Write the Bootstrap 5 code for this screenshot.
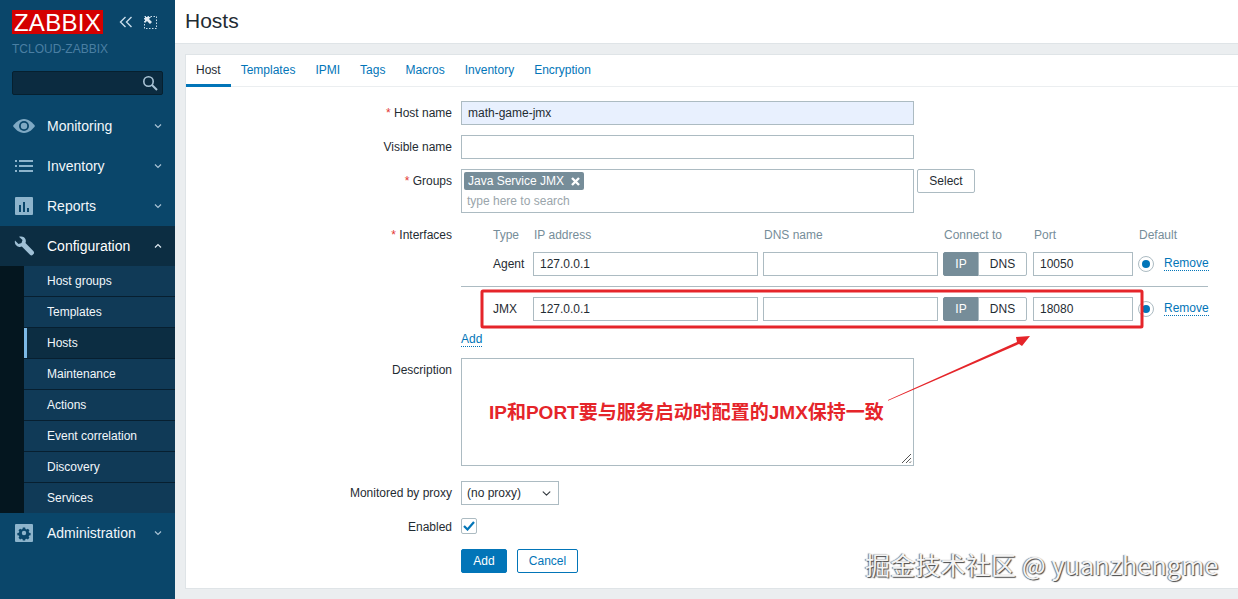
<!DOCTYPE html>
<html lang="en">
<head>
<meta charset="utf-8">
<title>Hosts</title>
<link rel="stylesheet" href="https://cdn.jsdelivr.net/npm/bootstrap@5.3.0/dist/css/bootstrap.min.css">
<style>
html,body{height:100%}
body{font:12px/14px "Liberation Sans",Arial,sans-serif;color:#1f2c33;background:#ebeef0;overflow:hidden;position:relative}
.shell{height:599px}
.side{width:175px;flex:none;background:#0a466a;color:#fff}
.side-top{height:106px;padding:10px 12px 0}
.logo-row{height:24px}
.zlogo{width:91px;height:24px;background:#d40000;color:#fff;font-size:24px;line-height:25px;text-align:center;letter-spacing:.3px}
.ctl{margin-left:16px;gap:11px}
.sname{margin-top:8px;color:#4a7fa3;font-size:12px;line-height:14px}
.sbox{margin-top:15px;width:151px;height:24px;background:#0b2b40;border:1px solid #06202f;border-radius:2px;padding:0 4px 0 0}
.mainitem{height:40px;padding:0 13px 0 13px;color:#f2f7fb;font-size:14px}
.mainitem .mico{width:22px;height:22px;flex:none;margin-right:12px}
.mainitem .chev{margin-left:auto}
.mainitem.open{background:#0c2d42;color:#fff}
.subwrap{background:#04161f;padding-left:24px}
.subitem{height:31px;padding:0 0 0 23px;color:#f2f7fb;line-height:30px;border-bottom:1px solid #071f30;background:#103a57}
.subitem:last-child{border-bottom:0;height:30px}
.subitem.cur{background:#0c2d42;box-shadow:inset 3px 0 0 #7cb9e6}
.mainzone{min-width:0}
.pagehead{height:44px;background:#fff;border-bottom:1px solid #dfe4e7;padding:0 10px}
.pagehead h1{margin:0;font-size:21px;line-height:42px;font-weight:400;color:#1f2c33}
.panel{margin:10px 0 0 10px;height:535px;background:#fff;border:1px solid #dfe4e7;border-right:0}
.tabbar{height:32px;border-bottom:1px solid #ebeef0;flex-wrap:nowrap}
.tabbar .nav-link{padding:0 10px;height:32px;line-height:30px;font-size:12px;color:#0275b8;border-bottom:3px solid transparent}
.tabbar .nav-link.active{color:#1f2c33;border-bottom-color:#0275b8}
.formbox{padding-top:14px;gap:10px}
.lbl{width:275px;flex:none;padding-right:9px;text-align:right;line-height:24px;color:#1f2c33}
.req{color:#e33734}
.fld.form-control{height:24px;border:1px solid #acbbc2;border-radius:0;padding:0 6px;font-size:12px;line-height:22px;color:#1f2c33;background:#fff;box-shadow:none}
.w-main{width:453px}
.fld.form-control.auto{background:#e8f0fe}
.multi{width:453px;height:44px;border:1px solid #acbbc2;padding:2px}
.chip{background:#768d99;color:#fff;border-radius:2px;height:18px;line-height:18px;padding:0 4px;width:120px;white-space:nowrap}
.chip svg{margin-top:5px}
.ph{color:#9aa5ab;margin:4px 0 0 3px}
.btn.bsel{height:24px;width:58px;padding:0;margin-left:3px;border:1px solid #acbbc2;border-radius:2px;color:#1f2c33;font-size:12px;background:#fff;line-height:22px}
.ifgrid{display:grid;grid-template-columns:27px 35px 225px 175px 85px 100px 21px 44px;column-gap:5px;width:747px}
.ifhead{color:#768d99;height:24px;line-height:24px}
.ifhead span{padding-left:1px}
.ifhead span:nth-child(2){padding-left:0}
.ifrow{height:24px;align-items:center}
.rowgap{margin-top:5px}
.conn.btn-group{height:24px;width:85px}
.conn .btn{padding:0;font-size:12px;height:24px;line-height:22px;border:1px solid #acbbc2;border-radius:2px;color:#1f2c33;background:#fff;width:49px;flex:none}
.conn .btn.on{background:#768d99;border-color:#768d99;color:#fff;width:36px}
.dash{color:#0275b8;text-decoration:none;border-bottom:1px dotted #0275b8;line-height:13px;display:inline-block}
.ifrow .dash{justify-self:start}
.radioz{width:16px;height:16px;border:1px solid #acbbc2;border-radius:50%;background:#fff;position:relative}
.radioz::after{content:"";position:absolute;left:3px;top:3px;width:8px;height:8px;border-radius:50%;background:#0275b8}
.divline{height:1px;background:#acbbc2;width:747px;margin:10px 0}
.addline{height:27px;padding-top:11px}
.dsc{width:453px;height:108px;border:1px solid #acbbc2;position:relative}
.grip{position:absolute;right:1px;bottom:1px}
.selrow{margin-top:5px}
.form-select.sel{width:98px;height:24px;border:1px solid #acbbc2;border-radius:0;font-size:12px;line-height:22px;padding:0 0 0 5px;color:#1f2c33;background-size:11px 9px;background-position:right 6px center;box-shadow:none}
.enrow{height:22px}
.enrow .lbl{padding-top:1px}
.ckb{width:16px;height:16px;border:1px solid #acbbc2;border-radius:2px;background:#fff}
.btnrow{margin-top:2px}
.btnset{gap:10px}
.btn.bmain{width:46px;height:24px;padding:0;background:#0275b8;border:1px solid #0275b8;color:#fff;font-size:12px;line-height:22px;border-radius:2px}
.btn.bghost{width:61px;height:24px;padding:0;background:#fff;border:1px solid #0275b8;color:#0275b8;font-size:12px;line-height:22px;border-radius:2px}
.overlay{position:absolute;left:0;top:0;pointer-events:none}
.redtext{position:absolute;left:489px;top:400px;font:700 19px/26px "Liberation Sans","Noto Sans CJK SC",sans-serif;color:#e5252a;white-space:nowrap}
.mark-wm{position:absolute;left:865px;top:548px;font:400 25px/32px "Noto Sans CJK SC",sans-serif;color:#f4f4f4;white-space:nowrap;text-shadow:1px 1px 1px #444,-1px 0 1px #777;letter-spacing:.2px}
</style>
</head>
<body>
<div class="shell d-flex">
  <aside class="side d-flex flex-column">
    <div class="side-top">
      <div class="logo-row d-flex align-items-center">
        <div class="zlogo">ZABBIX</div>
        <div class="ctl d-flex align-items-center">
          <svg width="14" height="12" viewBox="0 0 14 12" fill="none" stroke="#c9dcea" stroke-width="1.4"><path d="M6.5 1 1.5 6l5 5M12.5 1l-5 5 5 5"/></svg>
          <svg width="13" height="13" viewBox="0 0 13 13" fill="none"><rect x=".5" y=".5" width="12" height="12" stroke="#c9dcea" stroke-dasharray="1.5 1.5"/><path d="M1 1h6l-2 2 3 3-2 2-3-3-2 2z" fill="#dfeaf2"/></svg>
        </div>
      </div>
      <div class="sname">TCLOUD-ZABBIX</div>
      <div class="sbox d-flex align-items-center justify-content-end">
        <svg width="16" height="16" viewBox="0 0 16 16" fill="none" stroke="#a9c3d5" stroke-width="1.6"><circle cx="6.5" cy="6.5" r="4.7"/><path d="m10 10 5 5" stroke-width="2"/></svg>
      </div>
    </div>
    <nav class="nav flex-column flex-nowrap">
      <div class="mainitem d-flex align-items-center">
        <svg class="mico" viewBox="0 0 22 22"><path fill="#7fa9c4" d="M11 4C6 4 2 8 0 11c2 3 6 7 11 7s9-4 11-7c-2-3-6-7-11-7z"/><circle cx="11" cy="11" r="5" fill="#0a466a"/><circle cx="11" cy="11" r="3.2" fill="#7fa9c4"/></svg>
        <span>Monitoring</span>
        <svg class="chev" width="8" height="6" viewBox="0 0 8 6" fill="none" stroke="#a9c3d5" stroke-width="1.2"><path d="m1 1.5 3 3 3-3"/></svg>
      </div>
      <div class="mainitem d-flex align-items-center">
        <svg class="mico" viewBox="0 0 22 22"><path fill="#8db4cc" d="M2 5h2v2H2zM6 5h14v2H6zM2 10h2v2H2zM6 10h14v2H6zM2 15h2v2H2zM6 15h14v2H6z"/></svg>
        <span>Inventory</span>
        <svg class="chev" width="8" height="6" viewBox="0 0 8 6" fill="none" stroke="#a9c3d5" stroke-width="1.2"><path d="m1 1.5 3 3 3-3"/></svg>
      </div>
      <div class="mainitem d-flex align-items-center">
        <svg class="mico" viewBox="0 0 22 22"><rect x="2" y="2" width="18" height="18" rx="1" fill="#8db4cc"/><path fill="#0a466a" d="M6 10h2v7H6zM10 7h2v10h-2zM14 13h2v4h-2z"/></svg>
        <span>Reports</span>
        <svg class="chev" width="8" height="6" viewBox="0 0 8 6" fill="none" stroke="#a9c3d5" stroke-width="1.2"><path d="m1 1.5 3 3 3-3"/></svg>
      </div>
      <div class="mainitem open d-flex align-items-center">
        <svg class="mico" viewBox="0 0 22 22"><path fill="#9fc0d6" d="M2 5.500 5.500 9 8.500 8 9.500 5 6 1.800c3-1 6 .2 6.700 3 .3 1.100.2 2.200-.2 3.200l8 8.300c.8.800.8 2 0 2.800l-.7.700c-.8.800-2 .8-2.800 0l-8.200-8.200c-1 .4-2.100.5-3.200.2C3 10.900 1.200 8.500 2 5.500z"/></svg>
        <span>Configuration</span>
        <svg class="chev" width="8" height="6" viewBox="0 0 8 6" fill="none" stroke="#dfeaf2" stroke-width="1.2"><path d="m1 4.500 3-3 3 3"/></svg>
      </div>
      <div class="subwrap">
        <div class="subitem">Host groups</div>
        <div class="subitem">Templates</div>
        <div class="subitem cur">Hosts</div>
        <div class="subitem">Maintenance</div>
        <div class="subitem">Actions</div>
        <div class="subitem">Event correlation</div>
        <div class="subitem">Discovery</div>
        <div class="subitem">Services</div>
      </div>
      <div class="mainitem d-flex align-items-center">
        <svg class="mico" viewBox="0 0 22 22"><rect x="2" y="2" width="18" height="18" rx="1" fill="#8db4cc"/><path fill="#0a466a" d="M9.500 4h3l.4 2 1.300.6 1.800-1 2 2-1 1.800.6 1.300 1.900.4v2.800l-1.900.4-.6 1.300 1 1.800-2 2-1.800-1-1.300.6-.4 1.900h-3l-.4-1.900-1.300-.6-1.800 1-2-2 1-1.800-.6-1.300-1.900-.4v-2.800l1.900-.4.600-1.300-1-1.800 2-2 1.800 1 1.300-.6z" transform="translate(2.400 2.300) scale(.78)"/><circle cx="11" cy="11" r="2.200" fill="#8db4cc"/></svg>
        <span>Administration</span>
        <svg class="chev" width="8" height="6" viewBox="0 0 8 6" fill="none" stroke="#a9c3d5" stroke-width="1.2"><path d="m1 1.500 3 3 3-3"/></svg>
      </div>
    </nav>
  </aside>
  <main class="mainzone flex-grow-1">
    <header class="pagehead"><h1>Hosts</h1></header>
    <section class="panel d-flex flex-column">
      <ul class="nav tabbar">
        <li class="nav-item"><a class="nav-link active" href="#">Host</a></li>
        <li class="nav-item"><a class="nav-link" href="#">Templates</a></li>
        <li class="nav-item"><a class="nav-link" href="#">IPMI</a></li>
        <li class="nav-item"><a class="nav-link" href="#">Tags</a></li>
        <li class="nav-item"><a class="nav-link" href="#">Macros</a></li>
        <li class="nav-item"><a class="nav-link" href="#">Inventory</a></li>
        <li class="nav-item"><a class="nav-link" href="#">Encryption</a></li>
      </ul>
      <form class="formbox d-flex flex-column">
        <div class="d-flex"><label class="lbl"><span class="req">*</span> Host name</label><input class="form-control fld auto w-main" value="math-game-jmx"></div>
        <div class="d-flex"><label class="lbl">Visible name</label><input class="form-control fld w-main"></div>
        <div class="d-flex"><label class="lbl"><span class="req">*</span> Groups</label>
          <div class="multi"><div class="chip d-flex justify-content-between"><span>Java Service JMX</span><svg width="9" height="9" viewBox="0 0 9 9" stroke="#fff" stroke-width="2.4"><path d="m1 1 7 7M8 1 1 8"/></svg></div><div class="ph">type here to search</div></div>
          <button type="button" class="btn bsel">Select</button>
        </div>
        <div class="d-flex"><label class="lbl"><span class="req">*</span> Interfaces</label>
          <div>
            <div class="ifgrid ifhead"><span></span><span>Type</span><span>IP address</span><span>DNS name</span><span>Connect to</span><span>Port</span><span>Default</span><span></span></div>
            <div class="ifgrid ifrow rowgap">
              <span></span><span>Agent</span>
              <input class="form-control fld" value="127.0.0.1"><input class="form-control fld">
              <div class="btn-group conn"><button type="button" class="btn on">IP</button><button type="button" class="btn">DNS</button></div>
              <input class="form-control fld" value="10050">
              <span class="radioz"></span>
              <a class="dash" href="#">Remove</a>
            </div>
            <div class="divline"></div>
            <div class="ifgrid ifrow">
              <span></span><span>JMX</span>
              <input class="form-control fld" value="127.0.0.1"><input class="form-control fld">
              <div class="btn-group conn"><button type="button" class="btn on">IP</button><button type="button" class="btn">DNS</button></div>
              <input class="form-control fld" value="18080">
              <span class="radioz"></span>
              <a class="dash" href="#">Remove</a>
            </div>
            <div class="addline"><a class="dash" href="#">Add</a></div>
          </div>
        </div>
        <div class="d-flex"><label class="lbl">Description</label><div class="dsc"><svg class="grip" width="11" height="11" viewBox="0 0 11 11" stroke="#555" fill="none"><path d="M1 10 10 1M5 10l5-5M8.500 10l1.500-1.500"/></svg></div></div>
        <div class="d-flex selrow"><label class="lbl">Monitored by proxy</label><select class="form-select sel"><option>(no proxy)</option></select></div>
        <div class="d-flex align-items-center enrow"><label class="lbl">Enabled</label><span class="ckb d-flex align-items-center justify-content-center"><svg width="12" height="10" viewBox="0 0 12 10" fill="none" stroke="#0275b8" stroke-width="2.200"><path d="m1 5 3.500 3.500L11 1"/></svg></span></div>
        <div class="d-flex btnrow"><span class="lbl"></span><div class="d-flex btnset"><button type="button" class="btn bmain">Add</button><button type="button" class="btn bghost">Cancel</button></div></div>
      </form>
    </section>
  </main>
</div>
<svg class="overlay" width="1238" height="599" viewBox="0 0 1238 599" fill="none">
  <rect x="482" y="291" width="660" height="36" rx="1" stroke="#e5252a" stroke-width="3"/>
  <path fill="#e5252a" d="M888 400 1017 342 1016 337 1030 336 1022 346 1019 344 888 400.800z"/>
</svg>
<div class="redtext">IP和PORT要与服务启动时配置的JMX保持一致</div>
<div class="mark-wm">掘金技术社区 @ yuanzhengme</div>
</body>
</html>
